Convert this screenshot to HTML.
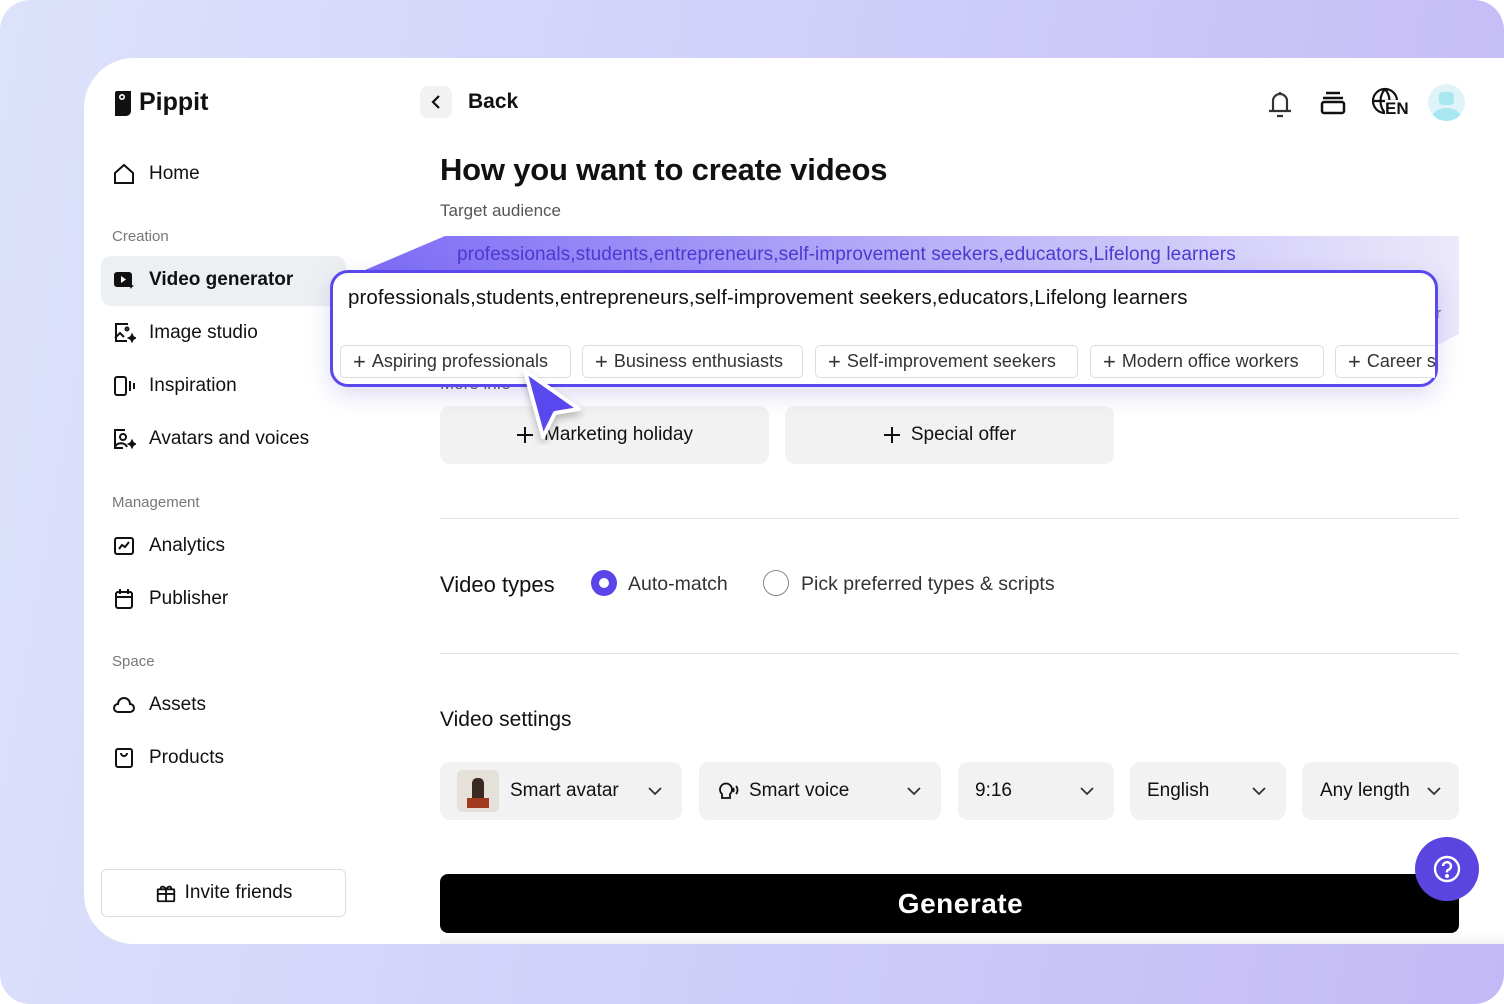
<!DOCTYPE html>
<html><head><style>
*{box-sizing:border-box;margin:0;padding:0}
html,body{background:#fff}
body{width:1504px;height:1004px;overflow:hidden;font-family:"Liberation Sans",sans-serif;color:#111;position:relative}
.wrap{position:absolute;left:0;top:0;width:1504px;height:1004px;border-radius:30px;overflow:hidden;background:linear-gradient(100deg,#dde2fb 0%,#cfcff9 50%,#c4b9f6 100%)}
.card{position:absolute;left:84px;top:58px;width:1420px;height:886px;background:#fff;border-radius:50px 0 0 50px;overflow:hidden}
.abs{position:absolute}
.nav{position:absolute;left:28px;font-size:19px;display:flex;align-items:center;gap:13px;color:#111}
.nav svg{width:24px;height:24px}
.sec{position:absolute;left:28px;font-size:15px;color:#777}
.chip{position:absolute;height:33px;border:1.5px solid #ddd;border-radius:5px;font-size:18px;color:#333;padding:0 12px;display:flex;align-items:center;background:#fff;white-space:nowrap;top:345px}
.dd{position:absolute;top:704px;height:58px;background:#f2f2f2;border-radius:10px;font-size:19px;display:flex;align-items:center;color:#111}
.chev{position:absolute;right:20px;top:22px;width:14px;height:14px}
.pill{position:absolute;top:348px;width:329px;height:58px;background:#f2f2f2;border-radius:10px;font-size:19px;display:flex;align-items:center;justify-content:center;gap:10px}
</style></head><body><div class="wrap">
<div class="card">
 <div class="abs" style="left:29px;top:30px;display:flex;align-items:center;gap:6px">
  <svg width="20" height="28" viewBox="0 0 20 28"><path d="M3 2h15v20a5 5 0 0 1-5 5H2V4z" fill="#111"/><circle cx="9" cy="8" r="3" fill="#fff"/><circle cx="9" cy="8" r="1.4" fill="#111"/></svg>
  <span style="font-size:25px;font-weight:bold">Pippit</span>
 </div>
 <div class="nav" style="top:104px"><svg viewBox="0 0 24 24" fill="none" stroke="#111" stroke-width="2"><path d="M3 11l9-8 9 8v10H3z"/></svg>Home</div>
 <div class="sec" style="top:170px">Creation</div>
 <div class="abs" style="left:17px;top:198px;width:245px;height:50px;background:#edf0f2;border-radius:10px"></div>
 <div class="nav" style="top:210px;font-weight:bold"><svg viewBox="0 0 24 24"><rect x="2" y="4" width="18" height="15" rx="3" fill="#111"/><path d="M9 8l5 3.5-5 3.5z" fill="#fff"/><path d="M19 15l1 2 2 1-2 1-1 2-1-2-2-1 2-1z" fill="#111"/></svg>Video generator</div>
 <div class="nav" style="top:263px"><svg viewBox="0 0 24 24" fill="none" stroke="#111" stroke-width="2"><path d="M16 3H4v17h11M3 17l5-5 4 4"/><circle cx="15" cy="8" r="1.5"/><path d="M20 14l1 2 2 1-2 1-1 2-1-2-2-1 2-1z" fill="#111"/></svg>Image studio</div>
 <div class="nav" style="top:316px"><svg viewBox="0 0 24 24" fill="none" stroke="#111" stroke-width="2"><rect x="3" y="3" width="11" height="18" rx="2"/><path d="M18 7v10M22 9v6"/></svg>Inspiration</div>
 <div class="nav" style="top:369px"><svg viewBox="0 0 24 24" fill="none" stroke="#111" stroke-width="2"><path d="M13 3H3v18h8M3 20c2-5 10-5 12 0"/><circle cx="11" cy="10" r="3"/><path d="M20 14l1 2 2 1-2 1-1 2-1-2-2-1 2-1z" fill="#111"/></svg>Avatars and voices</div>
 <div class="sec" style="top:436px">Management</div>
 <div class="nav" style="top:476px"><svg viewBox="0 0 24 24" fill="none" stroke="#111" stroke-width="2"><rect x="3" y="4" width="18" height="16" rx="2"/><path d="M7 15l3-4 3 2 4-5"/></svg>Analytics</div>
 <div class="nav" style="top:529px"><svg viewBox="0 0 24 24" fill="none" stroke="#111" stroke-width="2"><rect x="4" y="5" width="16" height="16" rx="2"/><path d="M4 10h16M8 2v5M16 2v5"/></svg>Publisher</div>
 <div class="sec" style="top:595px">Space</div>
 <div class="nav" style="top:635px"><svg viewBox="0 0 24 24" fill="none" stroke="#111" stroke-width="2"><path d="M6 19a4 4 0 0 1 0-8 6 6 0 0 1 12 0 4 4 0 0 1 0 8z"/></svg>Assets</div>
 <div class="nav" style="top:688px"><svg viewBox="0 0 24 24" fill="none" stroke="#111" stroke-width="2"><rect x="4" y="3" width="16" height="18" rx="2"/><path d="M9 7a3 3 0 0 0 6 0"/></svg>Products</div>
 <div class="abs" style="left:17px;top:811px;width:245px;height:48px;border:1.5px solid #ddd;border-radius:6px;display:flex;align-items:center;justify-content:center;gap:8px;font-size:19px">
  <svg width="22" height="22" viewBox="0 0 24 24" fill="none" stroke="#111" stroke-width="2"><rect x="3" y="8" width="18" height="13" rx="1"/><path d="M3 13h18M12 8v13M12 8c-3-5-7-3-5 0M12 8c3-5 7-3 5 0"/></svg>Invite friends</div>

 <div class="abs" style="left:336px;top:28px;width:32px;height:32px;background:#f2f2f2;border-radius:8px"><svg width="32" height="32" viewBox="0 0 32 32" fill="none" stroke="#111" stroke-width="2.2"><path d="M19 10l-6 6 6 6"/></svg></div>
 <div class="abs" style="left:384px;top:32px;font-size:21px;font-weight:bold">Back</div>
 <svg class="abs" style="left:1180px;top:29px" width="32" height="32" viewBox="0 0 32 32" fill="none" stroke="#333" stroke-width="2.2"><path d="M9 24V14a7 7 0 0 1 14 0v10M5 24h22M13 29h6"/><path d="M16 5v2"/></svg>
 <svg class="abs" style="left:1234px;top:30px" width="30" height="30" viewBox="0 0 30 30" fill="none" stroke="#111" stroke-width="2.5"><path d="M8 5h14M5 10h20"/><rect x="4" y="14" width="22" height="11" rx="2"/></svg>
 <div class="abs" style="left:1286px;top:28px;width:40px;height:34px">
  <svg width="32" height="32" viewBox="0 0 32 32" fill="none" stroke="#111" stroke-width="2.2"><circle cx="15" cy="15" r="12"/><path d="M3 15h24M15 3c-6 7-6 17 0 24M15 3c6 7 6 17 0 24"/></svg>
  <span class="abs" style="left:15px;top:14px;font-size:17px;font-weight:bold;background:#fff;line-height:18px">EN</span></div>
 <div class="abs" style="left:1344px;top:26px;width:37px;height:37px;border-radius:50%;background:#dff4f8;overflow:hidden">
  <div class="abs" style="left:11px;top:8px;width:15px;height:13px;background:#a8e6f0;border-radius:4px"></div>
  <div class="abs" style="left:4px;top:24px;width:29px;height:20px;background:#a8e6f0;border-radius:50%"></div></div>

 <div class="abs" style="left:356px;top:94px;font-size:31px;font-weight:bold;letter-spacing:-0.2px">How you want to create videos</div>
 <div class="abs" style="left:356px;top:143px;font-size:17px;color:#555">Target audience</div>
 <div class="abs" style="left:356px;top:316px;font-size:17px;color:#555">More info</div>
 <div class="pill" style="left:356px"><svg width="18" height="18" viewBox="0 0 18 18" stroke="#111" stroke-width="2"><path d="M9 1v16M1 9h16"/></svg>Marketing holiday</div>
 <div class="pill" style="left:701px"><svg width="18" height="18" viewBox="0 0 18 18" stroke="#111" stroke-width="2"><path d="M9 1v16M1 9h16"/></svg>Special offer</div>
 <div class="abs" style="left:356px;top:460px;width:1019px;height:1px;background:#e3e3e3"></div>
 <div class="abs" style="left:356px;top:514px;font-size:22px">Video types</div>
 <div class="abs" style="left:507px;top:512px;width:26px;height:26px;border-radius:50%;background:#5b45e8"><div class="abs" style="left:8px;top:8px;width:10px;height:10px;border-radius:50%;background:#fff"></div></div>
 <div class="abs" style="left:544px;top:515px;font-size:19.5px;color:#333">Auto-match</div>
 <div class="abs" style="left:679px;top:512px;width:26px;height:26px;border-radius:50%;border:1.5px solid #888"></div>
 <div class="abs" style="left:717px;top:515px;font-size:19.5px;color:#333">Pick preferred types &amp; scripts</div>
 <div class="abs" style="left:356px;top:595px;width:1019px;height:1px;background:#e3e3e3"></div>
 <div class="abs" style="left:356px;top:650px;font-size:21px">Video settings</div>

 <div class="dd" style="left:356px;width:242px"><div class="abs" style="left:17px;top:8px;width:42px;height:42px;background:#e6e0da;border-radius:5px"><div class="abs" style="left:15px;top:8px;width:12px;height:28px;background:#3a2a22;border-radius:5px 5px 0 0"></div><div class="abs" style="left:10px;top:28px;width:22px;height:10px;background:#a23a20"></div></div><span style="margin-left:70px">Smart avatar</span><svg class="chev" viewBox="0 0 14 14" fill="none" stroke="#333" stroke-width="1.8"><path d="M1 4l6 6 6-6"/></svg></div>
 <div class="dd" style="left:615px;width:242px"><svg style="margin-left:18px" width="22" height="22" viewBox="0 0 22 22" fill="none" stroke="#111" stroke-width="1.8"><path d="M5 18v-4a6 6 0 1 1 8 0v4zM16 8c1 1 1 3 0 4M19 6c2 2 2 6 0 8"/></svg><span style="margin-left:10px">Smart voice</span><svg class="chev" viewBox="0 0 14 14" fill="none" stroke="#333" stroke-width="1.8"><path d="M1 4l6 6 6-6"/></svg></div>
 <div class="dd" style="left:874px;width:156px"><span style="margin-left:17px">9:16</span><svg class="chev" viewBox="0 0 14 14" fill="none" stroke="#333" stroke-width="1.8"><path d="M1 4l6 6 6-6"/></svg></div>
 <div class="dd" style="left:1046px;width:156px"><span style="margin-left:17px">English</span><svg class="chev" viewBox="0 0 14 14" fill="none" stroke="#333" stroke-width="1.8"><path d="M1 4l6 6 6-6"/></svg></div>
 <div class="dd" style="left:1218px;width:157px"><span style="margin-left:18px">Any length</span><svg class="chev" viewBox="0 0 14 14" fill="none" stroke="#333" stroke-width="1.8" style="right:18px"><path d="M1 4l6 6 6-6"/></svg></div>

 <div class="abs" style="left:356px;top:816px;width:1019px;height:59px;background:#000;border-radius:8px;color:#fff;font-size:28px;font-weight:bold;display:flex;align-items:center;justify-content:center;padding-left:22px;letter-spacing:0.5px">Generate</div>
 <div class="abs" style="left:356px;top:875px;width:1064px;height:11px;background:linear-gradient(#fff,#f3f3f3)"></div>
</div>

<svg class="abs" style="left:360px;top:234px" width="1100" height="110">
 <defs><linearGradient id="g" x1="0" x2="1"><stop offset="0" stop-color="#7e6cf5"/><stop offset="0.45" stop-color="#b2a8f7"/><stop offset="1" stop-color="#ebe9fb"/></linearGradient></defs>
 <path d="M5 36L85 2H1099V100L1070 115H5z" fill="url(#g)"/>
</svg>
<div class="abs" style="left:457px;top:244px;font-size:19px;color:#4a3ad0;letter-spacing:0.1px">professionals,students,entrepreneurs,self-improvement seekers,educators,Lifelong learners</div>
<div class="abs" style="left:1436px;top:305px;font-size:15px;color:#555">r</div>

<div class="abs" style="left:330px;top:270px;width:1108px;height:117px;border:3px solid #5a48ef;border-radius:18px;background:#fff;box-shadow:0 8px 24px rgba(80,60,200,0.18);overflow:hidden">
 <div class="abs" style="left:15px;top:13px;font-size:20.5px;color:#111;white-space:nowrap;letter-spacing:0.1px">professionals,students,entrepreneurs,self-improvement seekers,educators,Lifelong learners</div>
</div>
<div style="position:absolute;left:0;top:0;width:1504px;height:1004px;clip-path:inset(0 69px 0 0)">
 <div class="chip" style="left:340px;width:231px"><span style="font-size:22px;margin-right:6px;font-weight:300">+</span>Aspiring professionals</div>
 <div class="chip" style="left:582px;width:221px"><span style="font-size:22px;margin-right:6px;font-weight:300">+</span>Business enthusiasts</div>
 <div class="chip" style="left:815px;width:263px"><span style="font-size:22px;margin-right:6px;font-weight:300">+</span>Self-improvement seekers</div>
 <div class="chip" style="left:1090px;width:234px"><span style="font-size:22px;margin-right:6px;font-weight:300">+</span>Modern office workers</div>
 <div class="chip" style="left:1335px"><span style="font-size:22px;margin-right:6px;font-weight:300">+</span>Career starters</div>
</div>

<svg class="abs" style="left:515px;top:365px" width="75" height="80" viewBox="0 0 75 80"><path d="M10 6L64 44 40 48 28 72z" fill="#5a48ef" stroke="#fff" stroke-width="4" stroke-linejoin="round" style="filter:drop-shadow(0 4px 4px rgba(0,0,0,.25))"/></svg>

<div class="abs" style="left:1415px;top:837px;width:64px;height:64px;border-radius:50%;background:#5b45e0;display:flex;align-items:center;justify-content:center"><svg width="30" height="30" viewBox="0 0 30 30" fill="none" stroke="#fff" stroke-width="2.4"><circle cx="15" cy="15" r="12"/><path d="M11 12a4 4 0 1 1 5 4c-1 .4-1 1-1 2.5"/><circle cx="15" cy="22" r=".8" fill="#fff"/></svg></div>
</div></body></html>
